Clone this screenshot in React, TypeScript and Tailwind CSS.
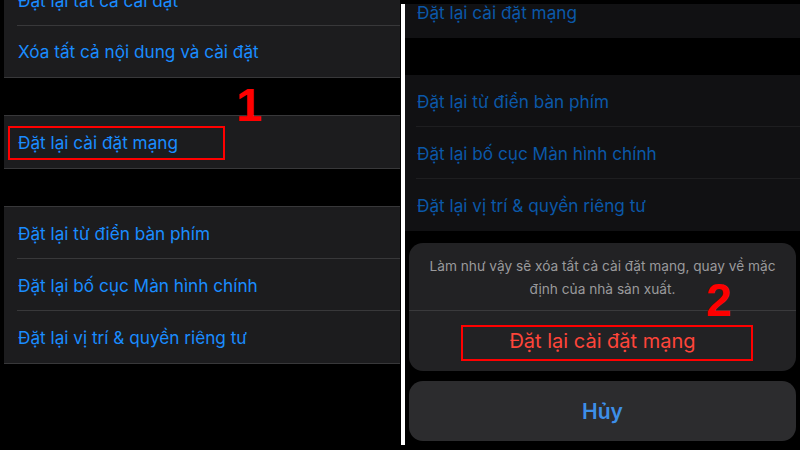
import React from 'react';

const font = { fontFamily: 'Inter, "Noto Sans", sans-serif' };
const digitFont = { fontFamily: '"Liberation Sans", Arial, sans-serif' };

// One settings row; `dim` is the state behind the action sheet
function Row({ label, dim = false, last = false }: { label: string; dim?: boolean; last?: boolean }) {
  return (
    <div className="h-[52px] flex flex-col">
      <div className={`flex-1 flex items-center pt-[2px] ${dim ? 'pl-[12px]' : 'pl-[14px]'}`}>
        <span className={`text-[17.2px] leading-none ${dim ? 'text-[#0b58a8]' : 'text-[#1a8cff]'}`}>{label}</span>
      </div>
      {!last && <div className={`h-px ${dim ? 'ml-[11px] bg-[#1e1e20]' : 'ml-[13px] bg-[#38383a]'}`}></div>}
    </div>
  );
}

function LeftPanel() {
  return (
    <div className="w-[400px] h-full pl-[4px] overflow-hidden flex flex-col">
      {/* top group, scrolled half out of view */}
      <div className="mt-[-26px] bg-[#1c1c1e] border-b border-[#38383a]">
        <Row label="Đặt lại tất cả cài đặt" />
        <div className="mt-[-1px]">
          <Row label="Xóa tất cả nội dung và cài đặt" last />
        </div>
      </div>

      <div className="h-[37px] relative z-10">
        <span className="absolute left-[232px] top-[3px] text-[47px] leading-none font-bold text-[#ff0000]" style={digitFont}>1</span>
      </div>

      <div className="relative bg-[#1c1c1e] border-y border-[#38383a]">
        <Row label="Đặt lại cài đặt mạng" last />
        <div className="absolute left-[4px] top-[10px] w-[217px] h-[34px] border-2 border-[#ff0000]"></div>
      </div>

      <div className="h-[37px]"></div>

      <div className="bg-[#1c1c1e] border-y border-[#38383a]">
        <Row label="Đặt lại từ điển bàn phím" />
        <Row label="Đặt lại bố cục Màn hình chính" />
        <Row label="Đặt lại vị trí & quyền riêng tư" last />
      </div>
    </div>
  );
}

function RightPanel() {
  return (
    <div className="flex-1 h-full pt-[4px] flex flex-col">
      <div className="overflow-hidden">
        <div className="mt-[-18px] bg-[#111113]">
          <Row label="Đặt lại cài đặt mạng" dim last />
        </div>
      </div>

      <div className="h-[37px]"></div>

      <div className="bg-[#111113]">
        <Row label="Đặt lại từ điển bàn phím" dim />
        <Row label="Đặt lại bố cục Màn hình chính" dim />
        <Row label="Đặt lại vị trí & quyền riêng tư" dim last />
      </div>

      {/* action sheet */}
      <div className="mx-[4px] mt-[12px] rounded-[14px] bg-[#222224] flex flex-col relative">
        <div className="h-[67px] flex items-center justify-center pt-[2px]">
          <p className="text-center text-[13.7px] leading-[23px] text-[#9a9a9c] whitespace-nowrap">
            Làm như vậy sẽ xóa tất cả cài đặt mạng, quay về mặc
            <br />
            định của nhà sản xuất.
          </p>
        </div>
        <div className="h-px bg-[#3a3a3c]"></div>
        <div className="h-[60px] flex items-center justify-center">
          <span className="text-[20px] leading-none text-[#ff453a]">Đặt lại cài đặt mạng</span>
        </div>
        <span className="absolute left-[297px] top-[34px] text-[46px] leading-none font-bold text-[#ff0000]" style={digitFont}>2</span>
        <div className="absolute left-[52px] top-[82px] w-[292px] h-[36px] border-2 border-[#ff0000]"></div>
      </div>

      <div className="mx-[4px] mt-[10px] h-[60px] rounded-[14px] bg-[#2c2c2e] flex items-center justify-center">
        <span className="text-[21px] leading-none font-semibold text-[#3d8fe8]">Hủy</span>
      </div>
    </div>
  );
}

export default function App() {
  return (
    <div className="w-[800px] h-[450px] bg-black flex overflow-hidden" style={font}>
      <LeftPanel />
      <div className="w-[1px]"></div>
      <div className="w-[4px] mt-[4px] mb-[5px] bg-white"></div>
      <RightPanel />
    </div>
  );
}
